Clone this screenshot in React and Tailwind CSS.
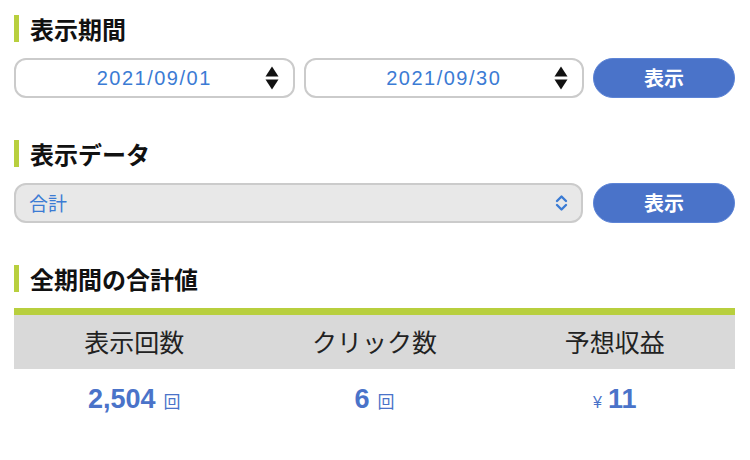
import React from 'react';

const jp = { fontFamily: '"Noto Sans CJK JP", sans-serif' };
const num = { fontFamily: '"Liberation Sans", "Noto Sans CJK JP", sans-serif' };

// 見出し（左に緑のバー）
const Heading = ({ children }) => (
  <div className="flex items-center h-[27px]">
    <div className="w-[5px] h-full bg-[#b8cf3e]" />
    <h2 className="ml-[11px] text-[24px] leading-none font-bold text-[#111]" style={jp}>
      {children}
    </h2>
  </div>
);

const DateInput = ({ value }) => (
  <div className="relative flex-1 h-[40px] rounded-[12px] border-2 border-[#cbcbcb] bg-white flex items-center justify-center">
    <span className="text-[20px] tracking-[1.5px] text-[#3b7bd4]" style={num}>{value}</span>
    <svg className="absolute right-[14px] top-1/2 -translate-y-1/2" width="14" height="24" viewBox="0 0 14 24">
      <path d="M7 0.5 L13.5 10.5 L0.5 10.5 Z" fill="#111" />
      <path d="M7 23.5 L13.5 13.5 L0.5 13.5 Z" fill="#111" />
    </svg>
  </div>
);

const Button = () => (
  <button className="w-[142px] h-[40px] rounded-full bg-[#4a73c9] border border-[#5d84d6] text-white text-[20px] font-bold" style={jp}>
    表示
  </button>
);

export default function App() {
  return (
    <div className="w-[750px] h-[460px] bg-white pl-[14px] pr-[15px] pt-[15px]">
      <Heading>表示期間</Heading>
      <div className="flex gap-[9px] mt-[16px]">
        <DateInput value="2021/09/01" />
        <DateInput value="2021/09/30" />
        <Button />
      </div>

      <div className="mt-[42px]">
        <Heading>表示データ</Heading>
      </div>
      <div className="flex gap-[10px] mt-[16px]">
        <div className="relative flex-1 h-[40px] rounded-[12px] border-2 border-[#cbcbcb] bg-[#e8e8e8] flex items-center pl-[13px]">
          <span className="text-[19px] text-[#3b7bd4]" style={jp}>合計</span>
          <svg className="absolute right-[13px] top-1/2 -translate-y-1/2" width="13" height="17" viewBox="0 0 13 17">
            <path d="M2 6.5 L6.5 2 L11 6.5" fill="none" stroke="#3b7bd4" strokeWidth="2.4" strokeLinecap="round" strokeLinejoin="round" />
            <path d="M2 10.5 L6.5 15 L11 10.5" fill="none" stroke="#3b7bd4" strokeWidth="2.4" strokeLinecap="round" strokeLinejoin="round" />
          </svg>
        </div>
        <Button />
      </div>

      <div className="mt-[42px]">
        <Heading>全期間の合計値</Heading>
      </div>

      <div className="mt-[16px] border-t-[7px] border-[#b8cf3e]">
        <div className="grid grid-cols-3 h-[54px] bg-[#d9d9d9] items-center text-center text-[25px] text-[#222]" style={jp}>
          <div>表示回数</div>
          <div>クリック数</div>
          <div>予想収益</div>
        </div>
        <div className="grid grid-cols-3 h-[60px] items-center text-center text-[#4a73c9]">
          <div className="flex items-baseline justify-center">
            <span className="text-[27px] font-bold" style={num}>2,504</span>
            <span className="ml-[8px] text-[17px]" style={jp}>回</span>
          </div>
          <div className="flex items-baseline justify-center">
            <span className="text-[27px] font-bold" style={num}>6</span>
            <span className="ml-[8px] text-[17px]" style={jp}>回</span>
          </div>
          <div className="flex items-baseline justify-center">
            <span className="text-[16px]" style={num}>¥</span>
            <span className="ml-[6px] text-[27px] font-bold" style={num}>11</span>
          </div>
        </div>
      </div>
    </div>
  );
}
